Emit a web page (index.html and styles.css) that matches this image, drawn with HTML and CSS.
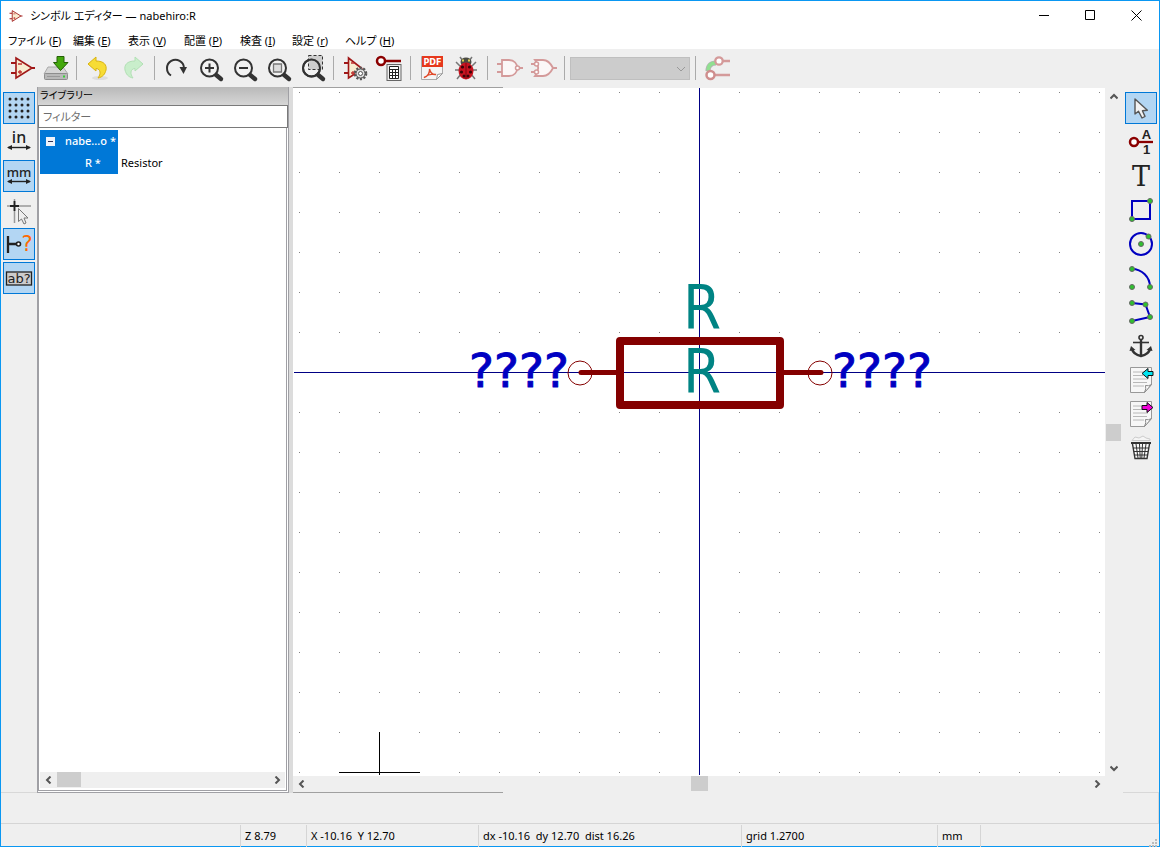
FILE: index.html
```html
<!DOCTYPE html>
<html lang="ja">
<head>
<meta charset="utf-8">
<title>シンボル エディター — nabehiro:R</title>
<link rel="stylesheet" href="styles.css">
</head>
<body>
<svg class="defs" aria-hidden="true">
  <defs>
    <g id="opamp"><path d="M6 11h5M6 21h5M26 16h4" stroke="#a01818" stroke-width="2" fill="none"/><path d="M11 6v20l16-10z" fill="#f8ecd0" stroke="#a01818" stroke-width="1.6"/><path d="M13 12h4M13 20h4M15 18v4" stroke="#c03030" stroke-width="1.3"/></g>
    <g id="lens"><path d="M21 22l6 5" stroke="#333" stroke-width="4.4" stroke-linecap="round"/><circle cx="15.500" cy="16" r="8.500" fill="#f2f2f2" stroke="#333" stroke-width="2"/></g>
    <g id="page"><path d="M5.500 3.500h21v17l-7 8h-14z" fill="#f7f7f7" stroke="#999"/><path d="M19.500 28.500q2-4 1-7 3 1 6-1z" fill="#fff" stroke="#888"/><path d="M8 8h12M8 11.500h10M8 15h15M8 18.500h14M8 22h11" stroke="#b8b8b8"/></g>
    <g id="arrowcur"><path d="M10 7v15l3.500-2.800L17 26l3-1.600-2.600-5.600 5-.6z" stroke="#555" stroke-width="1.400" stroke-linejoin="round"/></g>
  </defs>
</svg>
<div class="window">
  <header class="titlebar">
    <svg class="logo" viewBox="5 4 26 24"><use href="#opamp"/></svg>
    <h1>シンボル エディター — nabehiro:R</h1>
    <div class="caption">
      <button aria-label="最小化"><svg viewBox="0 0 11 11"><path d="M0 5.500h10" /></svg></button>
      <button aria-label="最大化"><svg viewBox="0 0 11 11"><path d="M.5.500h9v9h-9z"/></svg></button>
      <button aria-label="閉じる"><svg viewBox="0 0 11 11"><path d="M.5.500l10 10M10.500.500l-10 10"/></svg></button>
    </div>
  </header>
  <nav class="menubar">
    <button>ファイル (<u>F</u>)</button><button>編集 (<u>E</u>)</button><button>表示 (<u>V</u>)</button><button>配置 (<u>P</u>)</button><button>検査 (<u>I</u>)</button><button>設定 (<u>r</u>)</button><button>ヘルプ (<u>H</u>)</button>
  </nav>
  <div class="toolbar">
    <button class="tool" aria-label="新規シンボル"><svg viewBox="0 0 32 32"><use href="#opamp"/></svg></button>
    <button class="tool" aria-label="保存"><svg viewBox="0 0 32 32"><path d="M9 15h15l5 7H5z" fill="#d5d5d5" stroke="#aaa"/><rect x="5.500" y="21.500" width="23" height="6" rx="1" fill="#b8b8b8" stroke="#8d8d8d"/><path d="M8 24.500h13" stroke="#999"/><path d="M24 24.500h2" stroke="#35d035" stroke-width="2"/><path d="M18 4.500h7v6h4L21.500 18.500 14.500 10.500H18z" fill="#43a80c" stroke="#245f06"/></svg></button>
    <i class="sep"></i>
    <button class="tool" aria-label="元に戻す"><svg viewBox="0 0 32 32"><ellipse cx="18" cy="26" rx="8" ry="2" fill="#ddd"/><path d="M6 12l8-7v4c8 0 11 4 10 9-1 4-3 7-8 8 3-4 3-9-2-9.500V19z" fill="#f7dc35" stroke="#d9b310"/></svg></button>
    <button class="tool" aria-label="やり直し" disabled><svg viewBox="0 0 32 32"><path d="M27 12l-8-7v4c-8 0-11 4-10 9 1 4 3 7 8 8-3-4-3-9 2-9.500V19z" fill="#c9eecb" stroke="#b2e0b5"/></svg></button>
    <i class="sep wide"></i>
    <button class="tool" aria-label="再描画"><svg viewBox="0 0 32 32"><path d="M11 23.500A8.500 8.500 0 1 1 24 16" fill="none" stroke="#333" stroke-width="2"/><path d="M19.500 15h7.500l-3.500 7z" fill="#333"/></svg></button>
    <button class="tool" aria-label="ズームイン"><svg viewBox="0 0 32 32"><use href="#lens"/><path d="M11 16h9M15.500 11.500v9" stroke="#333" stroke-width="2"/></svg></button>
    <button class="tool" aria-label="ズームアウト"><svg viewBox="0 0 32 32"><use href="#lens"/><path d="M11 16h9" stroke="#333" stroke-width="2"/></svg></button>
    <button class="tool" aria-label="全体表示"><svg viewBox="0 0 32 32"><use href="#lens"/><path d="M11.500 12h8v8h-8z" fill="#ddd" stroke="#777" stroke-width="1.300"/></svg></button>
    <button class="tool" aria-label="範囲ズーム"><svg viewBox="0 0 32 32"><use href="#lens"/><path d="M12.500 3.500h14v14h-14z" fill="#c4c4c4" fill-opacity=".8" stroke="#333" stroke-dasharray="3 2"/><circle cx="15.500" cy="16" r="8.500" fill="none" stroke="#333" stroke-width="2"/></svg></button>
    <i class="sep"></i>
    <button class="tool" aria-label="シンボルのプロパティ"><svg viewBox="0 0 32 32"><path d="M5 11h5M5 21h5" stroke="#a01818" stroke-width="2"/><path d="M9.500 6v20l14-9z" fill="#f8ecd0" stroke="#a01818" stroke-width="1.600"/><path d="M12 11h3M12 21h4M14 19v4" stroke="#c03030" stroke-width="1.300"/><circle cx="21.500" cy="21.500" r="5.500" fill="#ccc" stroke="#555" stroke-width="2.600" stroke-dasharray="2 1.500"/><circle cx="21.500" cy="21.500" r="4.500" fill="#ddd" stroke="#555"/><circle cx="21.500" cy="21.500" r="2" fill="#fff" stroke="#555"/></svg></button>
    <button class="tool" aria-label="ピンテーブル"><svg viewBox="0 0 32 32"><path d="M12 9h16" stroke="#8b0000" stroke-width="2.500"/><circle cx="8" cy="9" r="4" fill="#fff" stroke="#8b0000" stroke-width="2.500"/><rect x="14" y="12.500" width="14" height="16" fill="#eee" stroke="#666"/><path d="M16.500 14.500h9v12h-9zM16.500 17.500h9M16.500 20.500h9M16.500 23.500h9M19.500 17v10M22.500 17v10" fill="#fff" stroke="#222"/></svg></button>
    <i class="sep"></i>
    <button class="tool" aria-label="データシート"><svg viewBox="0 0 32 32"><path d="M5.500 4.500h21v17l-6 6h-15z" fill="#f5f5f5" stroke="#aaa"/><path d="M20.500 27.500l1-5 5-1z" fill="#fff" stroke="#999"/><rect x="6" y="4" width="21" height="11" fill="#e6381c"/><text x="16.500" y="13" class="pdf">PDF</text><path d="M8 25.500c4-1 6-5 5.500-8.500 1 4 3 6 6.500 5.500-4-1-8 0-12 3z" fill="none" stroke="#e04a2a" stroke-width="1.400"/></svg></button>
    <button class="tool" aria-label="ERC"><svg viewBox="0 0 32 32"><path d="M10 5l3 4M22 5l-3 4M6 10l5 5M26 10l-5 5M5 18h5M27 18h-5M7 27l4-5M25 27l-4-5" stroke="#777" stroke-width="1.500"/><ellipse cx="16" cy="10" rx="5.500" ry="4.500" fill="#4a4a42"/><path d="M12 8.500h2M18 8.500h2" stroke="#e0d050" stroke-width="2"/><ellipse cx="16" cy="19" rx="7.500" ry="8.500" fill="#c91420"/><path d="M16 11v16" stroke="#7d0710"/><g fill="#3b0508"><circle cx="12.500" cy="15" r="1.600"/><circle cx="19.500" cy="15" r="1.600"/><circle cx="11.500" cy="20" r="1.600"/><circle cx="20.500" cy="20" r="1.600"/><circle cx="14" cy="24" r="1.500"/><circle cx="18" cy="24" r="1.500"/></g></svg></button>
    <i class="sep"></i>
    <button class="tool" aria-label="標準形状" disabled><svg viewBox="0 0 32 32"><path d="M4 12h5M4 20h5M25 16h5M9 8h7c11 0 11 16 0 16H9z" fill="#fbf7f7" stroke="#d49a9a" stroke-width="1.800"/><circle cx="24.500" cy="16" r="2" fill="#fff" stroke="#d49a9a" stroke-width="1.500"/></svg></button>
    <button class="tool" aria-label="代替形状" disabled><svg viewBox="0 0 32 32"><path d="M4 12h4M4 20h4M25 16h5M8 8h8c5 0 8 4 10 8-2 4-5 8-10 8H8c4-5 4-11 0-16z" fill="#fbf7f7" stroke="#d49a9a" stroke-width="1.800"/><circle cx="9.500" cy="12" r="2" fill="#fff" stroke="#d49a9a" stroke-width="1.500"/><circle cx="9.500" cy="20" r="2" fill="#fff" stroke="#d49a9a" stroke-width="1.500"/></svg></button>
    <i class="sep"></i>
    <div class="unit"><select aria-label="ユニット" disabled><option></option></select><svg viewBox="0 0 10 6"><path d="M1 1l4 4 4-4"/></svg></div>
    <i class="sep"></i>
    <button class="tool" aria-label="ピン同期編集" disabled><svg viewBox="0 0 32 32"><path d="M19 9h10M12 23h17" stroke="#d49a9a" stroke-width="2.500"/><path d="M7 19c0-5 3-8 8-8" fill="none" stroke="#777" stroke-opacity=".5" stroke-width="5"/><path d="M7 18.500c0-5 3-7.500 8-7.500" fill="none" stroke="#90e090" stroke-width="3.500"/><circle cx="18" cy="9" r="3.700" fill="#fff" stroke="#d49a9a" stroke-width="2.300"/><circle cx="9.500" cy="23" r="4" fill="#fff" stroke="#cf8e8e" stroke-width="2.500"/></svg></button>
  </div>
  <main class="body">
    <div class="side">
      <button class="tool on" aria-label="グリッド"><svg viewBox="0 0 32 32"><path d="M7 7h19M7 13h19M7 19h19M7 25h19" stroke="#222" stroke-width="3" stroke-linecap="round" stroke-dasharray="0 6"/></svg></button>
      <button class="tool"><svg viewBox="0 0 32 32"><text x="16" y="17" class="in">in</text><path d="M5 21.500h22" class="dim"/><path d="M4 21.500l5-2.500v5zM28 21.500l-5-2.500v5z" fill="#222"/></svg></button>
      <button class="tool on"><svg viewBox="0 0 32 32"><text x="16" y="17" class="mm">mm</text><path d="M5 21.500h22" class="dim"/><path d="M4 21.500l5-2.500v5zM28 21.500l-5-2.500v5z" fill="#222"/></svg></button>
      <button class="tool" aria-label="カーソル形状"><svg viewBox="0 0 32 32"><path d="M4 12h24M11.500 5v24" stroke="#999" stroke-width="1.500"/><path d="M7 12h9M11.500 7v10" stroke="#222" stroke-width="1.800"/><path d="M15.500 14.500v13l3-2.500 2.500 5 2-1-2-5h4z" fill="#eee" stroke="#777"/></svg></button>
      <button class="tool on"><svg viewBox="0 0 32 32"><path d="M5 8v17M5 16h9" stroke="#222" stroke-width="2.300"/><circle cx="15.500" cy="16" r="2" fill="#fff" stroke="#222" stroke-width="1.600"/><text x="24" y="23" class="ask">?</text></svg></button>
      <button class="tool on"><svg viewBox="0 0 32 32"><rect x="3.500" y="10" width="25" height="13" fill="#ccc" stroke="#222" stroke-width="1.300"/><text x="16" y="21" class="ab">ab?</text></svg></button>
    </div>
    <section class="library">
      <h2>ライブラリー</h2>
      <input type="text" aria-label="フィルター" placeholder="フィルター">
      <div class="tree">
        <ul>
          <li><span class="cell"><svg viewBox="0 0 9 9"><rect width="9" height="9" fill="#eef3fa"/><path d="M2 4.500h5" stroke="#335"/></svg><b>nabe...o *</b></span></li>
          <li><span class="cell child"><b>R *</b></span><span>Resistor</span></li>
        </ul>
        <div class="hbar treebar">
          <button aria-label="左"><svg viewBox="0 0 8 8"><path d="M5.500.500L2 4l3.500 3.500"/></svg></button>
          <i class="thumb"></i><span class="grow"></span>
          <button aria-label="右"><svg viewBox="0 0 8 8"><path d="M2.500.500L6 4 2.500 7.500"/></svg></button>
        </div>
      </div>
    </section>
    <section class="editor">
      <svg class="canvas" viewBox="293 88 812 688">
        <defs><pattern id="grid" width="40" height="40" patternUnits="userSpaceOnUse"><rect x="19" y="12" width="1" height="1" fill="#848484"/></pattern></defs>
        <rect x="294" y="88" width="811" height="687" fill="url(#grid)"/>
        <g fill="none" stroke="#000084"><path d="M294 372.500h811M699.500 88v687"/></g>
        <path d="M379.500 732v43M339 772.500h81" stroke="#000" fill="none"/>
        <g stroke="#840000" fill="none">
          <rect x="620" y="341" width="160" height="64" stroke-width="8" stroke-linejoin="round"/>
          <path d="M581 372.500h36M783 372.500h38" stroke-width="5" stroke-linecap="round"/>
          <circle cx="580" cy="373" r="12"/><circle cx="820" cy="373" r="12"/>
        </g>
        <g class="ref"><text x="702" y="329">R</text><text x="702" y="393">R</text></g>
        <g class="pin"><text x="519" y="387">????</text><text x="882" y="387">????</text></g>
      </svg>
      <div class="vbar">
        <button aria-label="上"><svg viewBox="0 0 8 8"><path d="M.5 5.500L4 2l3.500 3.500"/></svg></button>
        <span class="grow"></span><i class="thumb"></i><span class="grow"></span>
        <button aria-label="下"><svg viewBox="0 0 8 8"><path d="M.5 2.500L4 6l3.500-3.500"/></svg></button>
      </div>
      <div class="hbar">
        <button aria-label="左"><svg viewBox="0 0 8 8"><path d="M5.500.500L2 4l3.500 3.500"/></svg></button>
        <span class="grow"></span><i class="thumb"></i><span class="grow"></span>
        <button aria-label="右"><svg viewBox="0 0 8 8"><path d="M2.500.500L6 4 2.500 7.500"/></svg></button>
      </div>
    </section>
    <div class="side">
      <button class="tool on" aria-label="選択"><svg viewBox="0 0 32 32" fill="#f2f2f2"><use href="#arrowcur"/></svg></button>
      <button class="tool" aria-label="ピンを追加"><svg viewBox="0 0 32 32"><path d="M13 16h15" stroke="#8b0000" stroke-width="2.300"/><circle cx="9" cy="16" r="4" fill="#fff" stroke="#8b0000" stroke-width="2.500"/><text x="21.500" y="13" class="pinlab">A</text><text x="21.500" y="28" class="pinlab">1</text></svg></button>
      <button class="tool"><svg viewBox="0 0 32 32"><text x="16" y="26" class="tee">T</text></svg></button>
      <button class="tool" aria-label="矩形を追加"><svg viewBox="0 0 32 32"><path class="shape" d="M7 7h18v18H7z"/><circle class="node" cx="25" cy="7" r="2.500"/><circle class="node" cx="7" cy="25" r="2.500"/></svg></button>
      <button class="tool" aria-label="円を追加"><svg viewBox="0 0 32 32"><circle class="shape" cx="16" cy="16" r="11"/><circle class="node" cx="16" cy="16" r="2.500"/><circle class="node" cx="23.500" cy="8.500" r="2.500"/></svg></button>
      <button class="tool" aria-label="円弧を追加"><svg viewBox="0 0 32 32"><path class="shape" d="M7 7a18 18 0 0 1 18 18"/><circle class="node" cx="7" cy="7" r="2.500"/><circle class="node" cx="25" cy="25" r="2.500"/><circle class="node" cx="7" cy="25" r="2.500"/></svg></button>
      <button class="tool" aria-label="線を追加"><svg viewBox="0 0 32 32"><path class="shape" d="M7 7l13.500 1.500L25 21 7 25"/><circle class="node" cx="7" cy="7" r="2.500"/><circle class="node" cx="20.500" cy="8.500" r="2.500"/><circle class="node" cx="25" cy="21" r="2.500"/><circle class="node" cx="7" cy="25" r="2.500"/></svg></button>
      <button class="tool" aria-label="アンカー"><svg viewBox="0 0 32 32"><g fill="none" stroke="#333"><circle cx="16" cy="7.500" r="2" stroke-width="1.600"/><path d="M16 10v16" stroke-width="2.400"/><path d="M8 12.500h16" stroke-width="1.600"/><path d="M7 19c1 4 4 6 9 7 5-1 8-3 9-7" stroke-width="2.600"/></g><path d="M4.500 21l1.500-5 4.500 4zM27.500 21L26 16l-4.500 4z" fill="#333"/></svg></button>
      <button class="tool" aria-label="インポート"><svg viewBox="0 0 32 32"><use href="#page"/><path d="M17 9.500l6-5v3h5v4h-5v3z" fill="#00e5f0" stroke="#111"/></svg></button>
      <button class="tool" aria-label="エクスポート"><svg viewBox="0 0 32 32"><use href="#page"/><path d="M28 9.500l-6-5v3h-5v4h5v3z" fill="#f000d8" stroke="#111"/></svg></button>
      <button class="tool" aria-label="削除"><svg viewBox="0 0 32 32"><path d="M7 8.500l3-3.500 4 1 4-2 3 2 4 1v1.500z" fill="#f5f5f5" stroke="#ccc"/><path d="M6 10h20v2H6z" fill="#333"/><path d="M7.500 12l2.500 14.500h12L24.500 12" fill="#fafafa" stroke="#333" stroke-width="1.400"/><path d="M11 12l2 14M14.500 12l.7 14M17.500 12l-.7 14M21 12l-2 14M8 16h16M9 19.500h14M9.500 23h13" stroke="#333"/></svg></button>
    </div>
  </main>
  <div class="message"></div>
  <footer class="status">
    <span></span><span>Z 8.79</span><span>X -10.16&nbsp; Y 12.70</span><span>dx -10.16&nbsp; dy 12.70&nbsp; dist 16.26</span><span>grid 1.2700</span><span>mm</span><span><svg class="grip" viewBox="0 0 8 8"><path d="M6 0h2v2H6zM3 3h2v2H3zM6 3h2v2H6zM0 6h2v2H0zM3 6h2v2H3zM6 6h2v2H6z"/></svg></span>
  </footer>
</div>
</body>
</html>
```
FILE: styles.css
```css
* { box-sizing: border-box; }
body, h1, h2, ul { margin: 0; padding: 0; }
body {
  font: 11px/16px "Noto Sans", "Noto Sans CJK JP", sans-serif;
  font-feature-settings: "palt";
  color: #000;
}
h1, h2 { font-weight: normal; }
ul { list-style: none; }
button, input, select { font: inherit; font-feature-settings: inherit; color: inherit; }
button { padding: 0; border: 0; background: none; }
svg { display: block; }
.defs { position: absolute; width: 0; height: 0; }

.window {
  display: flex;
  flex-direction: column;
  height: 100vh;
  border: 1px solid #0a97f2;
  background: #efefef;
}

.titlebar { display: flex; align-items: center; height: 29px; padding-left: 8px; background: #fff; }
.logo { width: 14px; height: 14px; margin-right: 7px; }
.titlebar h1 { font-size: 11px; }
.caption { display: flex; margin-left: auto; }
.caption button { display: grid; place-items: center; width: 46px; height: 29px; }
.caption svg { width: 11px; height: 11px; fill: none; stroke: #000; }

.menubar {
  display: grid;
  grid-template-columns: 65px 55px 56px 56px 52px 53px 60px;
  height: 19px;
  padding-top: 2px;
  padding-left: 7px;
  background: #fff;
}
.menubar button { text-align: left; white-space: nowrap; }

.toolbar { display: flex; align-items: center; gap: 2px; height: 38px; padding-left: 4px; }
.tool { flex: none; width: 32px; height: 32px; }
.tool svg { width: 32px; height: 32px; }
.tool.on { background: #b3d6f3; box-shadow: inset 0 0 0 1px #0078d7; }
.sep { width: 7px; height: 24px; background: linear-gradient(#aaa, #aaa) center / 1px 100% no-repeat; }
.sep.wide { width: 8px; }
.unit { position: relative; }
.unit select {
  display: block;
  width: 120px;
  height: 23px;
  appearance: none;
  border: 1px solid #bfbfbf;
  border-radius: 0;
  background: #ccc;
  opacity: 1;
}
.unit svg { position: absolute; right: 4px; top: 9px; width: 10px; height: 6px; fill: none; stroke: #999; }

.body { display: flex; flex: 1; min-height: 0; }
.side { display: flex; flex: none; flex-direction: column; gap: 2px; width: 36px; padding: 5px 2px 0; border-bottom: 1px solid #d8d8d8; }

.library {
  display: flex;
  flex: none;
  flex-direction: column;
  width: 252px;
  margin-right: 4px;
  border: 1px solid #a0a0a5;
  border-top: 0;
  background: #fff;
  box-shadow: 4px 0 #dcdcdc;
}
.library h2 { height: 18px; padding-left: 2px; background: linear-gradient(#b9b9b9, #d6d6d6); font-size: 10px; line-height: 16px; }
.library input { width: 100%; height: 23px; padding: 0 4px; border: 1px solid #7a7a7a; }
.library input::placeholder { color: #6d6d6d; opacity: 1; }
.tree { display: flex; flex: 1; flex-direction: column; margin: 0 1px 1px 0; padding: 2px 1px; border: 1px solid #a0a0a5; border-top: 0; }
.tree ul { flex: 1; }
.tree li { display: flex; gap: 3px; height: 22px; line-height: 22px; }
.cell { display: flex; align-items: center; gap: 10px; width: 78px; padding-left: 6px; background: #0078d7; color: #fff; }
.cell svg { width: 9px; height: 9px; }
.cell b { font-weight: 500; }
.cell.child { padding-left: 45px; }

.editor {
  display: grid;
  flex: 1;
  min-width: 0;
  grid-template: minmax(0, 1fr) 17px / minmax(0, 1fr) 18px;
  padding-top: 1px;
  background: linear-gradient(#a0a0a0, #a0a0a0) top left / 210px 1px no-repeat, linear-gradient(#a0a0a0, #a0a0a0) bottom left / 210px 1px no-repeat;
}
.canvas { width: 100%; height: 100%; background: #fff; }
.ref text { fill: #008484; font: 61px "DejaVu Sans Condensed", "DejaVu Sans", sans-serif; text-anchor: middle; }
.pin text { fill: #0000c2; stroke: #0000c2; font: 47px "DejaVu Sans", sans-serif; text-anchor: middle; stroke-linejoin: round; }
.hbar, .vbar { display: flex; }
.vbar { flex-direction: column; }
.hbar button, .vbar button { display: grid; place-items: center; width: 17px; height: 17px; }
.hbar svg, .vbar svg { width: 8px; height: 8px; fill: none; stroke: #555; stroke-width: 2; }
.hbar { grid-column: 1; height: 16px; }
.hbar button { height: 16px; }
.thumb { width: 17px; height: 15px; background: #cdcdcd; }
.vbar .thumb { width: 15px; height: 17px; margin-left: 1px; }
.grow { flex: 1; }
.treebar { background: #efefef; }
.treebar .thumb { width: 24px; }

.message { height: 30px; border-right: 1px solid #d8d8d8; }
.status {
  display: grid;
  grid-template-columns: 239px 66px 172px 263px 196px 43px 1fr;
  height: 23px;
  padding: 1px 0;
  border-top: 1px solid #d5d5d5;
  line-height: 22px;
}
.status span { border-left: 1px solid #d5d5d5; padding-left: 4px; white-space: pre; }
.status span:first-child { border: 0; }
.status span:last-child { display: flex; align-items: flex-end; justify-content: flex-end; padding-right: 2px; }
.grip { width: 8px; height: 8px; fill: #bbb; }

.tool text { text-anchor: middle; fill: #222; }
.tool .in { font: 500 16px "Noto Sans", sans-serif; }
.tool .mm { font: 500 13px "Noto Sans", sans-serif; }
.tool .ab { font: 13px "DejaVu Sans", sans-serif; }
.tool .ask { font: 21px "DejaVu Sans", sans-serif; fill: #ff6a00; }
.tool .pdf { font: bold 9px "DejaVu Sans Condensed", "DejaVu Sans", sans-serif; fill: #fff; }
.tool .pinlab { font: bold 13px "Liberation Sans", sans-serif; }
.tool .tee { font: 27px "DejaVu Serif", serif; }
.dim { fill: none; stroke: #222; stroke-width: 1.4; }
.shape { fill: none; stroke: #0000c0; stroke-width: 2; }
.node { fill: #2fc02f; stroke: #666; }
```
